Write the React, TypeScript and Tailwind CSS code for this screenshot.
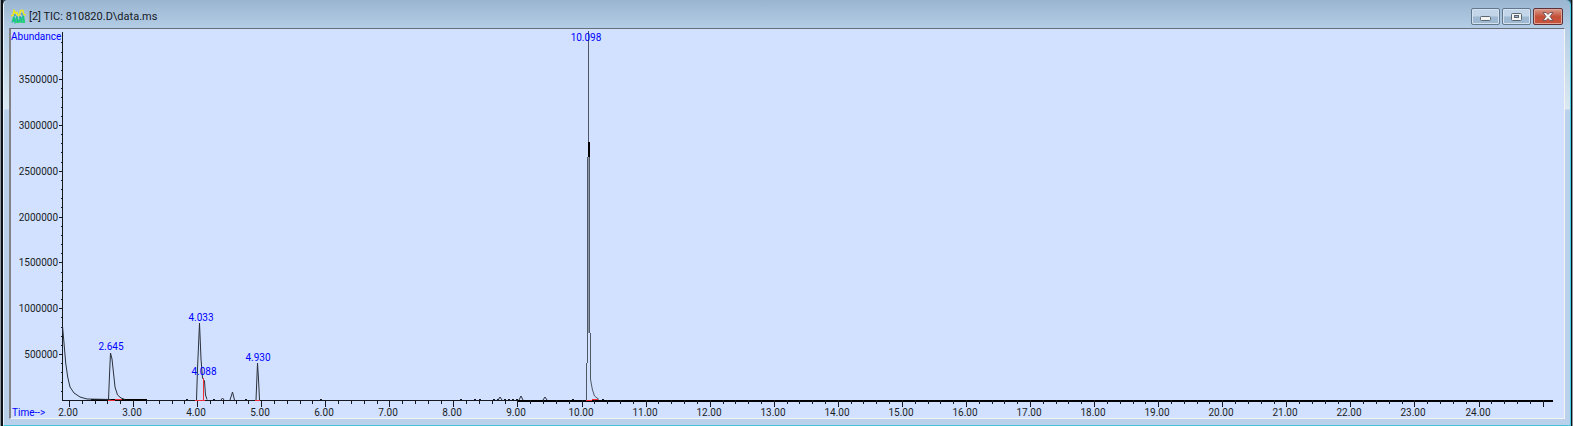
const W = 1553;
const H = 389;
const BASE = 371;
const AXIS = 51;
const px = (t: number) => Math.round(58 + (t - 2) * 64.07);
const py = (v: number) => Math.round(BASE - (v / 500000) * 45.85);

const majors = Array.from({ length: 24 }, (_, i) => i + 2);
const minors = Array.from({ length: 116 }, (_, i) => 2 + i * 0.2);
const levels = Array.from({ length: 7 }, (_, i) => (i + 1) * 500000);
const fine = Array.from({ length: 39 }, (_, i) => (i + 1) * 100000);

const peaks = [
  { label: '2.645', x: 100, y: 321 },
  { label: '4.033', x: 190, y: 292 },
  { label: '4.088', x: 193, y: 346 },
  { label: '4.930', x: 247, y: 332 },
  { label: '10.098', x: 575, y: 12 },
];

const noise = [175, 202, 234, 309, 449, 463, 468, 482, 486, 493, 497, 501, 505, 561, 591];

function Chromatogram() {
  return (
    <svg
      viewBox={`0 0 ${W} ${H}`}
      className="block h-auto w-full font-['Roboto','Liberation_Sans',sans-serif] text-[10px]"
      role="img"
      aria-label="Total ion chromatogram"
    >
      <g fill="none" stroke="#15181f" strokeWidth="1" shapeRendering="crispEdges">
        <path d={`M${AXIS + 0.5} 3V${BASE + 1}`} />
        {fine.map((v) => (
          <path key={v} d={`M${AXIS - 1} ${py(v) + 0.5}h2`} />
        ))}
        {levels.map((v) => (
          <path key={v} d={`M${AXIS - 3} ${py(v) + 0.5}h3`} />
        ))}
        <path d={`M${AXIS} ${BASE + 0.5}H1542`} />
        <path d={`M80 ${BASE}H136M507 ${BASE + 1}H1542`} strokeWidth="2" stroke="#000" />
        {minors.map((t) => (
          <path key={t} d={`M${px(t) + 0.5} ${BASE}v4`} />
        ))}
        {majors.map((t) => (
          <path key={t} d={`M${px(t) + 0.5} ${BASE}v7`} />
        ))}
        {noise.map((x) => (
          <path key={x} d={`M${x} ${BASE - 0.5}h2`} />
        ))}
      </g>
      <g fill="none" stroke="#2b303a" strokeWidth="1">
        <path d="M51.5 297L53 314L54.7 334L56.7 348L59 358L63 364L69 368L76 370L100 370.5" />
        <path d="M97.5 371L98.5 346L99.5 324L101 330L102.5 344L104 358L106.5 366L110 369L114 370.5" />
        <path d="M185.5 371L186.5 340L188.5 294L190 330L191.5 349L193.5 352L194.5 366L196 370.5" />
        <path d="M219 371L221.5 363L223.5 371" />
        <path d="M245 371L246.5 334L247.5 350L248.5 371" />
        <path d="M210 371L211.5 369L213 371M487 371L489 368L491 371M508 371L510 367L512 371M532 371L534 368L536 371" />
      </g>
      <g fill="none" stroke="#4f5867" shapeRendering="crispEdges">
        <path d="M577.5 128V304" stroke="#8c97a8" />
        <path d="M577.5 2V113M576.5 128V334M575.5 334V371M578.5 128V304M579.5 304V350" />
        <path d="M578 113V128" stroke="#000" strokeWidth="2" />
      </g>
      <path d="M579.5 350L580.5 356L581.5 361L583.5 367L588 370.5" fill="none" stroke="#4f5867" />
      <g fill="none" stroke="#f03038" shapeRendering="crispEdges">
        <path d="M97 371.5H104M104 370.5H111" />
        <path d="M184 371.5H194M192.5 349V371" />
        <path d="M244 371.5H249" />
        <path d="M575 371.5H581M581 370.5H587" />
      </g>
      <g fill="#1a1d24" textAnchor="end">
        {levels.map((v) => (
          <text key={v} x="47" y={py(v) + 4}>
            {v}
          </text>
        ))}
      </g>
      <g fill="#1a1d24" textAnchor="middle">
        {majors
          .filter((t) => t < 25)
          .map((t) => (
            <text key={t} x={px(t) - 1} y="387">
              {t.toFixed(2)}
            </text>
          ))}
      </g>
      <g fill="#0000ff">
        <text x="0" y="11">Abundance</text>
        <text x="1" y="387">Time--&gt;</text>
        {peaks.map((p) => (
          <text key={p.label} x={p.x} y={p.y} textAnchor="middle">
            {p.label}
          </text>
        ))}
      </g>
    </svg>
  );
}

function AppIcon() {
  return (
    <svg viewBox="0 0 15 15" className="size-[15px]" fill="none" aria-hidden="true">
      <path d="M1 13.500L3 8L4 13L6 7L7 13M8 13L9.500 8L10.500 13L12 6.500L13.500 13.500" stroke="#24b8a6" strokeWidth="1.4" />
      <path d="M2.500 8V13M6 9V14M9 9V14M12.500 7V13M4 13H8M10 13H14" stroke="#1bd467" strokeWidth="1.4" />
      <path d="M0 6.500H2L3 1.500L4.500 4L6 3.500L7 6.500H8.500L9.500 1.500H12L12.500 5L15 6" stroke="#e9e81f" strokeWidth="1.5" />
      <path d="M4 5V7M9 7V9M11 4V6M7 11V12" stroke="#2386b4" />
    </svg>
  );
}

const plainButton =
  'flex h-[17px] w-[29px] items-center justify-center rounded-[2px] border border-[#62788f] bg-linear-to-b from-[#c3d5e8] from-45% to-[#9fb9d3] to-55% shadow-[inset_0_0_0_1px_#d5e3f0]';
const closeButton =
  'flex h-[17px] w-[30px] items-center justify-center rounded-[2px] border border-[#5e3038] bg-linear-to-b from-[#d99a8c] via-[#c4503a] via-50% to-[#c9513a] shadow-[inset_0_0_0_1px_#e0a596]';

export default function App() {
  return (
    <main className="bg-[#8f979e] px-px">
      <div className="border-r border-l-2 border-[#0b1218] bg-[#34495c]">
        <div className="rounded-t-[5px] border-r border-b border-l border-r-[#45cbe3] border-b-[#45c4dc] border-l-[#eef5fa] bg-[linear-gradient(#9ab5d0_0px,#b4cde6_28px,#bfd5e8_50px,#dbe8f1_109px,#b9d1ea_110px)] px-[5px] pb-[6px]">
          <header className="flex h-[28px] items-center justify-between pt-[5px] pr-[2px] pl-[2px]">
            <div className="flex items-center gap-[3px]">
              <AppIcon />
              <h1 className="font-['Roboto',sans-serif] text-[11px] leading-[14px] text-[#15181f]">
                [2] TIC: 810820.D\data.ms
              </h1>
            </div>
            <div className="flex gap-[2px]">
              <button type="button" aria-label="Minimize" className={plainButton}>
                <svg viewBox="0 0 11 5" className="mt-[3px] h-[5px] w-[11px]" aria-hidden="true">
                  <rect x="0.5" y="0.5" width="10" height="4" rx="1" fill="#f4f4f2" stroke="#5b6673" />
                </svg>
              </button>
              <button type="button" aria-label="Maximize" className={plainButton}>
                <svg viewBox="0 0 11 8" className="h-[8px] w-[11px]" aria-hidden="true">
                  <rect x="0.5" y="0.5" width="10" height="7" rx="1" fill="#f4f4f2" stroke="#5b6673" />
                  <rect x="3.5" y="2.5" width="4" height="2" fill="#9fb5cc" stroke="#5b6673" />
                </svg>
              </button>
              <button type="button" aria-label="Close" className={closeButton}>
                <svg viewBox="0 0 12 9" className="h-[9px] w-[12px]" aria-hidden="true">
                  <path
                    d="M1 0.5H4L6 2.5L8 0.5H11L8 4.5L11 8.5H8L6 6.5L4 8.5H1L4 4.5Z"
                    fill="#f7f4f3"
                    stroke="#5d4850"
                    strokeWidth="0.8"
                  />
                </svg>
              </button>
            </div>
          </header>
          <section className="border-t border-r border-b border-l-2 border-t-[#696d75] border-r-[#f4f4f6] border-b-[#f4f4f6] border-l-[#808286] bg-[#d1e1ff]">
            <Chromatogram />
          </section>
        </div>
      </div>
    </main>
  );
}
